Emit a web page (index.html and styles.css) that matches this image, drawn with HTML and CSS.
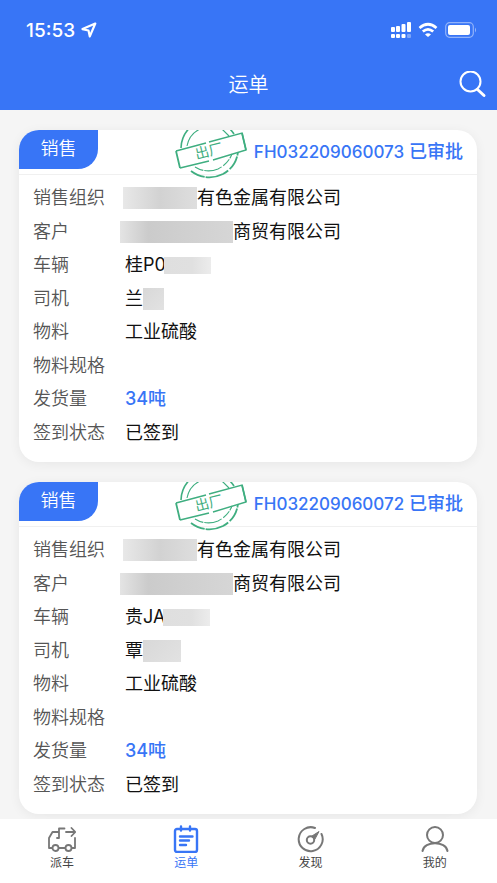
FILE: index.html
```html
<!DOCTYPE html>
<html lang="zh-CN">
<head>
    <meta charset="UTF-8">
    <meta name="viewport" content="width=device-width, initial-scale=1">
    <title>运单</title>
    <link rel="stylesheet" href="styles.css">
</head>
<body>
<svg class="defs" aria-hidden="true">
    <symbol id="stamp" viewBox="0 0 74 56">
        <g fill="none" stroke="#3fae80">
            <path d="M6 19A30 30 0 0 1 18 -4M46 -6A30 30 0 0 1 59 5" stroke-width="1.6"/>
            <path d="M12 17A24 24 0 0 1 48 1L54 7" stroke-width="1.1"/>
            <path d="M16 42A30 30 0 0 0 48 45Q61 38 63 23" stroke-width="1.8" stroke-dasharray="15 1 24 2"/>
            <path d="M20 38A25 25 0 0 0 43 40Q53 35 57 25" stroke-width="1.1" stroke-dasharray="9 1 18 2"/>
            <path d="M1 22L31 14M34 13L67 4L71 21L38 31M34 32L5 39Z" stroke-width="1.4"/>
            <path d="M1 22L5 39M67 4L71 21" stroke-width="1.8"/>
        </g>
        <text class="stamp-text" x="34" y="27" text-anchor="middle" transform="rotate(-14 34 23)">出厂</text>
    </symbol>
</svg>

<div class="app">
    <header class="header">
        <div class="status-bar">
            <span class="time">15:53</span>
            <svg class="location" width="16" height="16" viewBox="0 0 16 16" aria-hidden="true">
                <path d="M14.3 1.5L1.5 7.1L7.5 8.5L8.8 14.4Z" fill="none" stroke="#fff" stroke-width="2.2" stroke-linejoin="round"/>
            </svg>
            <div class="status-icons">
                <svg width="20" height="16" viewBox="0 0 20 16" fill="#fff" aria-hidden="true">
                    <rect x="0" y="5" width="4" height="5" rx="1"/>
                    <rect x="5" y="4" width="4" height="6" rx="1"/>
                    <rect x="10.5" y="2" width="4" height="8" rx="1"/>
                    <rect x="16" y="0" width="4" height="10" rx="1"/>
                    <rect x="0" y="12" width="4" height="4" rx="1"/>
                    <rect x="5" y="12" width="4" height="4" rx="1"/>
                    <rect x="10.5" y="12" width="4" height="4" rx="1"/>
                    <rect x="16" y="12" width="4" height="4" rx="1" opacity=".35"/>
                </svg>
                <svg width="20" height="16" viewBox="0 0 20 16" fill="none" stroke="#fff" stroke-width="2.7" aria-hidden="true">
                    <path d="M1.5 6Q10 -1.5 18.5 6"/>
                    <path d="M4.8 9.6Q10 5 15.2 9.6"/>
                    <path d="M7 12.4Q10 10 13 12.4L10 15Z" fill="#fff" stroke="none"/>
                </svg>
                <svg width="32" height="16" viewBox="0 0 32 16" aria-hidden="true">
                    <rect x=".7" y=".7" width="27.6" height="14.6" rx="4" fill="none" stroke="#fff" stroke-width="1.2" opacity=".45"/>
                    <rect x="3" y="3" width="22" height="10" rx="2" fill="#fff"/>
                    <path d="M30 5.5Q32 8 30 10.5Z" fill="#fff" opacity=".5"/>
                </svg>
            </div>
        </div>
        <div class="title-bar">
            <h1>运单</h1>
            <button class="search" type="button" aria-label="搜索">
                <svg width="28" height="28" viewBox="0 0 28 28" fill="none" stroke="#fff" aria-hidden="true">
                    <circle cx="11.5" cy="10.5" r="10" stroke-width="2"/>
                    <path d="M18.5 18.5L25 24.5" stroke-width="3" stroke-linecap="round"/>
                </svg>
            </button>
        </div>
    </header>

    <main class="list">
        <article class="card">
            <div class="card-head">
                <span class="badge">销售</span>
                <svg class="stamp" role="img" aria-label="出厂"><use href="#stamp"/></svg>
                <span class="order"><span class="number">FH032209060073</span> 已审批</span>
            </div>
            <dl class="info">
                <div class="row"><dt>销售组织</dt><dd><span class="mask mask-org"></span>有色金属有限公司</dd></div>
                <div class="row"><dt>客户</dt><dd><span class="mask mask-customer"></span>商贸有限公司</dd></div>
                <div class="row"><dt>车辆</dt><dd>桂P0<span class="mask mask-plate"></span></dd></div>
                <div class="row"><dt>司机</dt><dd>兰<span class="mask mask-name"></span></dd></div>
                <div class="row"><dt>物料</dt><dd>工业硫酸</dd></div>
                <div class="row"><dt>物料规格</dt><dd></dd></div>
                <div class="row"><dt>发货量</dt><dd class="amount">34吨</dd></div>
                <div class="row"><dt>签到状态</dt><dd>已签到</dd></div>
            </dl>
        </article>

        <article class="card">
            <div class="card-head">
                <span class="badge">销售</span>
                <svg class="stamp" role="img" aria-label="出厂"><use href="#stamp"/></svg>
                <span class="order"><span class="number">FH032209060072</span> 已审批</span>
            </div>
            <dl class="info">
                <div class="row"><dt>销售组织</dt><dd><span class="mask mask-org"></span>有色金属有限公司</dd></div>
                <div class="row"><dt>客户</dt><dd><span class="mask mask-customer"></span>商贸有限公司</dd></div>
                <div class="row"><dt>车辆</dt><dd>贵JA<span class="mask mask-plate"></span></dd></div>
                <div class="row"><dt>司机</dt><dd>覃<span class="mask mask-name wide"></span></dd></div>
                <div class="row"><dt>物料</dt><dd>工业硫酸</dd></div>
                <div class="row"><dt>物料规格</dt><dd></dd></div>
                <div class="row"><dt>发货量</dt><dd class="amount">34吨</dd></div>
                <div class="row"><dt>签到状态</dt><dd>已签到</dd></div>
            </dl>
        </article>
    </main>

    <nav class="tabs">
        <a class="tab" href="#dispatch">
            <svg width="28" height="28" viewBox="0 0 28 28" fill="none" stroke="currentColor" stroke-width="1.8" stroke-linecap="round" stroke-linejoin="round" aria-hidden="true">
                <path d="M4 23H1V13L4.500 7H10.500M9 13H11V3.500H16.500M18 7H27M23.500 3L27.300 7L23.500 11M27 13V23H24M11 23H17"/>
                <circle cx="7.500" cy="23" r="3"/>
                <circle cx="20.500" cy="23" r="3"/>
            </svg>
            <span>派车</span>
        </a>
        <a class="tab active" href="#waybill" aria-current="page">
            <svg width="28" height="28" viewBox="0 0 28 28" fill="none" stroke="currentColor" stroke-width="2.4" stroke-linecap="round" aria-hidden="true">
                <rect x="3" y="4" width="22" height="23" rx="2"/>
                <path d="M9 1.500V5.500M18 1.500V5.500M8 11.500H20.500M8 15.500H17M8 20H14"/>
            </svg>
            <span>运单</span>
        </a>
        <a class="tab" href="#discover">
            <svg width="28" height="28" viewBox="0 0 28 28" fill="none" stroke="currentColor" stroke-width="2" stroke-linecap="round" aria-hidden="true">
                <path d="M18 3A12 12 0 1 0 24.500 9"/>
                <circle cx="13.500" cy="15" r="3.700"/>
                <path d="M15 11L22 6.500L18 14Z" fill="currentColor" stroke-width="1"/>
            </svg>
            <span>发现</span>
        </a>
        <a class="tab" href="#mine">
            <svg width="28" height="28" viewBox="0 0 28 28" fill="none" stroke="currentColor" stroke-width="2" stroke-linecap="round" aria-hidden="true">
                <circle cx="14" cy="10" r="8"/>
                <path d="M1.500 26C3 15.500 25 15.500 26.500 26"/>
            </svg>
            <span>我的</span>
        </a>
    </nav>
</div>
</body>
</html>
```
FILE: styles.css
```css
* {
    box-sizing: border-box;
}

html, body {
    margin: 0;
    padding: 0;
    height: 100%;
}

body {
    background: #f5f5f5;
    color: #111;
    font-family: Inter, "Noto Sans CJK SC", sans-serif;
    font-size: 18px;
}

.defs {
    display: none;
}

.app {
    height: 100vh;
    display: flex;
    flex-direction: column;
}

/* header */
.header {
    background: #3875f6;
    color: #fff;
    flex: none;
}

.status-bar {
    display: flex;
    align-items: center;
    height: 60px;
    padding: 0 20px 0 26px;
}

.time {
    font-size: 19px;
    font-weight: 500;
}

.location {
    margin-left: 6px;
}

.status-icons {
    display: flex;
    gap: 7px;
    margin-left: auto;
}

.title-bar {
    display: grid;
    grid-template-columns: 1fr auto 1fr;
    align-items: center;
    height: 50px;
    padding: 0 10px;
}

.title-bar h1 {
    grid-column: 2;
    margin: 0;
    font-size: 20px;
    font-weight: 350;
    line-height: 28px;
}

.search {
    justify-self: end;
    display: flex;
    padding: 0;
    border: none;
    background: none;
    cursor: pointer;
}

/* waybill cards */
.list {
    flex: 1;
    min-height: 0;
    overflow: hidden;
    display: flex;
    flex-direction: column;
    gap: 20px;
    padding: 20px 20px 0 19px;
}

.card {
    flex: none;
    display: flex;
    flex-direction: column;
    min-height: 332px;
    background: #fff;
    border-radius: 20px;
    overflow: hidden;
    box-shadow: 0 2px 12px rgba(0, 0, 0, 0.06);
}

.card-head {
    position: relative;
    display: flex;
    justify-content: space-between;
    height: 45px;
    padding-right: 14px;
    border-bottom: 1px solid #f0f0f0;
}

.badge {
    width: 79px;
    height: 39px;
    border-bottom-right-radius: 20px;
    background: #3875f6;
    color: #fff;
    font-weight: 350;
    line-height: 38px;
    text-align: center;
}

.stamp {
    position: absolute;
    right: 228px;
    top: -1px;
    width: 74px;
    height: 56px;
}

.stamp-text {
    fill: #3fae80;
    font-size: 14px;
    font-weight: 400;
}

.order {
    color: #3875f6;
    font-weight: 500;
    line-height: 44px;
    white-space: nowrap;
}

.order .number {
    font-size: 17px;
}

.info {
    flex: 1;
    display: flex;
    flex-direction: column;
    justify-content: space-between;
    margin: 0;
    padding: 10px 14px 16px;
}

.row {
    display: grid;
    grid-template-columns: 92px 1fr;
    line-height: 26px;
}

.row dt {
    color: #555;
    font-weight: 350;
}

.row dd {
    display: flex;
    align-items: center;
    margin: 0;
}

.row .amount {
    color: #3875f6;
    font-weight: 500;
}

/* hidden part of a value */
.mask {
    height: 22px;
    background: linear-gradient(90deg, #e8e8e8, #d2d2d2 50%, #dedede);
}

.mask-org {
    width: 74px;
    margin-left: -2px;
}

.mask-customer {
    width: 113px;
    margin-left: -5px;
    background: linear-gradient(90deg, #e4e4e4, #cbcbcb 25%, #d6d6d6);
}

.mask-plate {
    width: 47px;
    height: 17px;
    margin-left: -2px;
    background: linear-gradient(90deg, #dfdfdf, #e0e0e0 60%, #ececec);
}

.mask-name {
    width: 21px;
    background: linear-gradient(135deg, #d8d8d8, #e2e2e2);
}

.mask-name.wide {
    width: 38px;
}

/* bottom tabs */
.tabs {
    flex: none;
    display: grid;
    grid-template-columns: repeat(4, 1fr);
    height: 64px;
    background: #fff;
}

.tab {
    display: flex;
    flex-direction: column;
    align-items: center;
    padding-top: 6px;
    color: #777;
    font-size: 12px;
    line-height: 20px;
    text-decoration: none;
}

.tab span {
    color: #444;
}

.tab.active,
.tab.active span {
    color: #3875f6;
}
```
